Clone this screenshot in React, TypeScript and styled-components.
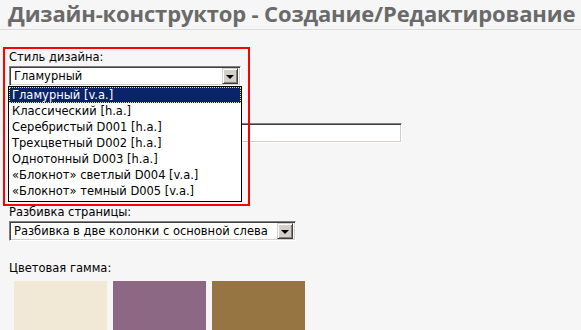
import React from "react";
import styled, { createGlobalStyle } from "styled-components";

const Global = createGlobalStyle`
  html, body { margin: 0; padding: 0; background: #f6f6f6; }
  body { font-family: "DejaVu Sans", Verdana, sans-serif; font-size: 11.5px; color: #000; }
`;

const Page = styled.div`
  position: relative;
  width: 581px;
  height: 330px;
  overflow: hidden;
`;

const Header = styled.header`
  height: 29px;
  border-bottom: 1px solid #dcdcdc;
  padding-left: 8px;
`;

const Title = styled.h1`
  margin: 0;
  font-family: "Open Sans", "DejaVu Sans", sans-serif;
  font-weight: 700;
  font-size: 22px;
  letter-spacing: -0.15px;
  line-height: 26px;
  color: #6a6a6a;
  white-space: nowrap;
`;

const Form = styled.div`
  position: relative;
  padding: 20px 0 0 9px;
  display: flex;
  flex-direction: column;
`;

const Field = styled.div<{ $gap: number }>`
  display: flex;
  flex-direction: column;
  align-items: flex-start;
  gap: 2px;
  margin-bottom: ${(p) => p.$gap}px;
`;

const Label = styled.div`
  line-height: 14px;
  height: 14px;
  white-space: nowrap;
`;

const inset = `
  box-sizing: border-box;
  border: 1px solid;
  border-color: #808080 #ffffff #ffffff #808080;
  box-shadow: inset 1px 1px 0 #404040, inset -1px -1px 0 #d4d0c8;
  background: #fff;
`;

const SelectWrap = styled.div`
  position: relative;
`;

const Select = styled.div<{ $width: number }>`
  ${inset}
  width: ${(p) => p.$width}px;
  height: 20px;
  padding: 1px 2px 1px 4px;
  display: flex;
  align-items: center;
  justify-content: space-between;
  line-height: 16px;
  white-space: nowrap;
`;

const Value = styled.span`
  flex: 1;
  overflow: hidden;
`;

const ArrowButton = styled.span`
  box-sizing: border-box;
  width: 16px;
  height: 16px;
  background: #d4d0c8;
  border: 1px solid;
  border-color: #d4d0c8 #404040 #404040 #d4d0c8;
  box-shadow: inset 1px 1px 0 #fff, inset -1px -1px 0 #808080;
  display: flex;
  align-items: center;
  justify-content: center;
`;

const Arrow = styled.span`
  width: 0;
  height: 0;
  border-left: 4px solid transparent;
  border-right: 4px solid transparent;
  border-top: 4px solid #000;
  margin-top: 1px;
`;

const TextInput = styled.div<{ $width: number }>`
  ${inset}
  width: ${(p) => p.$width}px;
  height: 20px;
`;

const List = styled.ul`
  position: absolute;
  top: 20px;
  left: -1px;
  width: 234px;
  margin: 0;
  padding: 0 0 2px;
  list-style: none;
  background: #fff;
  border: 1px solid #000;
  box-sizing: border-box;
  z-index: 2;
`;

const Option = styled.li<{ $active?: boolean }>`
  height: 16px;
  line-height: 16px;
  padding-left: 3px;
  white-space: nowrap;
  background: ${(p) => (p.$active ? "#0a246a" : "transparent")};
  color: ${(p) => (p.$active ? "#fff" : "#000")};
  outline: ${(p) => (p.$active ? "1px dotted #e8d890" : "none")};
  outline-offset: -1px;
`;

const Highlight = styled.div`
  position: absolute;
  left: 3px;
  top: 17px;
  width: 247px;
  height: 159px;
  box-sizing: border-box;
  border: 2px solid #ff0000;
  z-index: 3;
  pointer-events: none;
`;

const Swatches = styled.div`
  display: flex;
  gap: 6px;
  margin-left: 5px;
  margin-top: 4px;
`;

const Swatch = styled.div<{ $color: string }>`
  width: 93px;
  height: 60px;
  background: ${(p) => p.$color};
`;

const options = [
  "Гламурный [v.a.]",
  "Классический [h.a.]",
  "Серебристый D001 [h.a.]",
  "Трехцветный D002 [h.a.]",
  "Однотонный D003 [h.a.]",
  "«Блокнот» светлый D004 [v.a.]",
  "«Блокнот» темный D005 [v.a.]",
];

export default function App() {
  return (
    <Page>
      <Global />
      <Header>
        <Title>Дизайн-конструктор - Создание/Редактирование</Title>
      </Header>
      <Form>
        <Highlight />
        <Field $gap={21}>
          <Label>Стиль дизайна:</Label>
          <SelectWrap>
            <Select $width={232}>
              <Value>Гламурный</Value>
              <ArrowButton>
                <Arrow />
              </ArrowButton>
            </Select>
            <List>
              {options.map((o, i) => (
                <Option key={o} $active={i === 0}>
                  {o}
                </Option>
              ))}
            </List>
          </SelectWrap>
        </Field>
        <Field $gap={62}>
          <Label />
          <TextInput $width={393} />
        </Field>
        <Field $gap={20}>
          <Label>Разбивка страницы:</Label>
          <Select $width={287}>
            <Value>Разбивка в две колонки с основной слева</Value>
            <ArrowButton>
              <Arrow />
            </ArrowButton>
          </Select>
        </Field>
        <Field $gap={0}>
          <Label>Цветовая гамма:</Label>
          <Swatches>
            <Swatch $color="#f1e8d6" />
            <Swatch $color="#8d6884" />
            <Swatch $color="#967543" />
          </Swatches>
        </Field>
      </Form>
    </Page>
  );
}
